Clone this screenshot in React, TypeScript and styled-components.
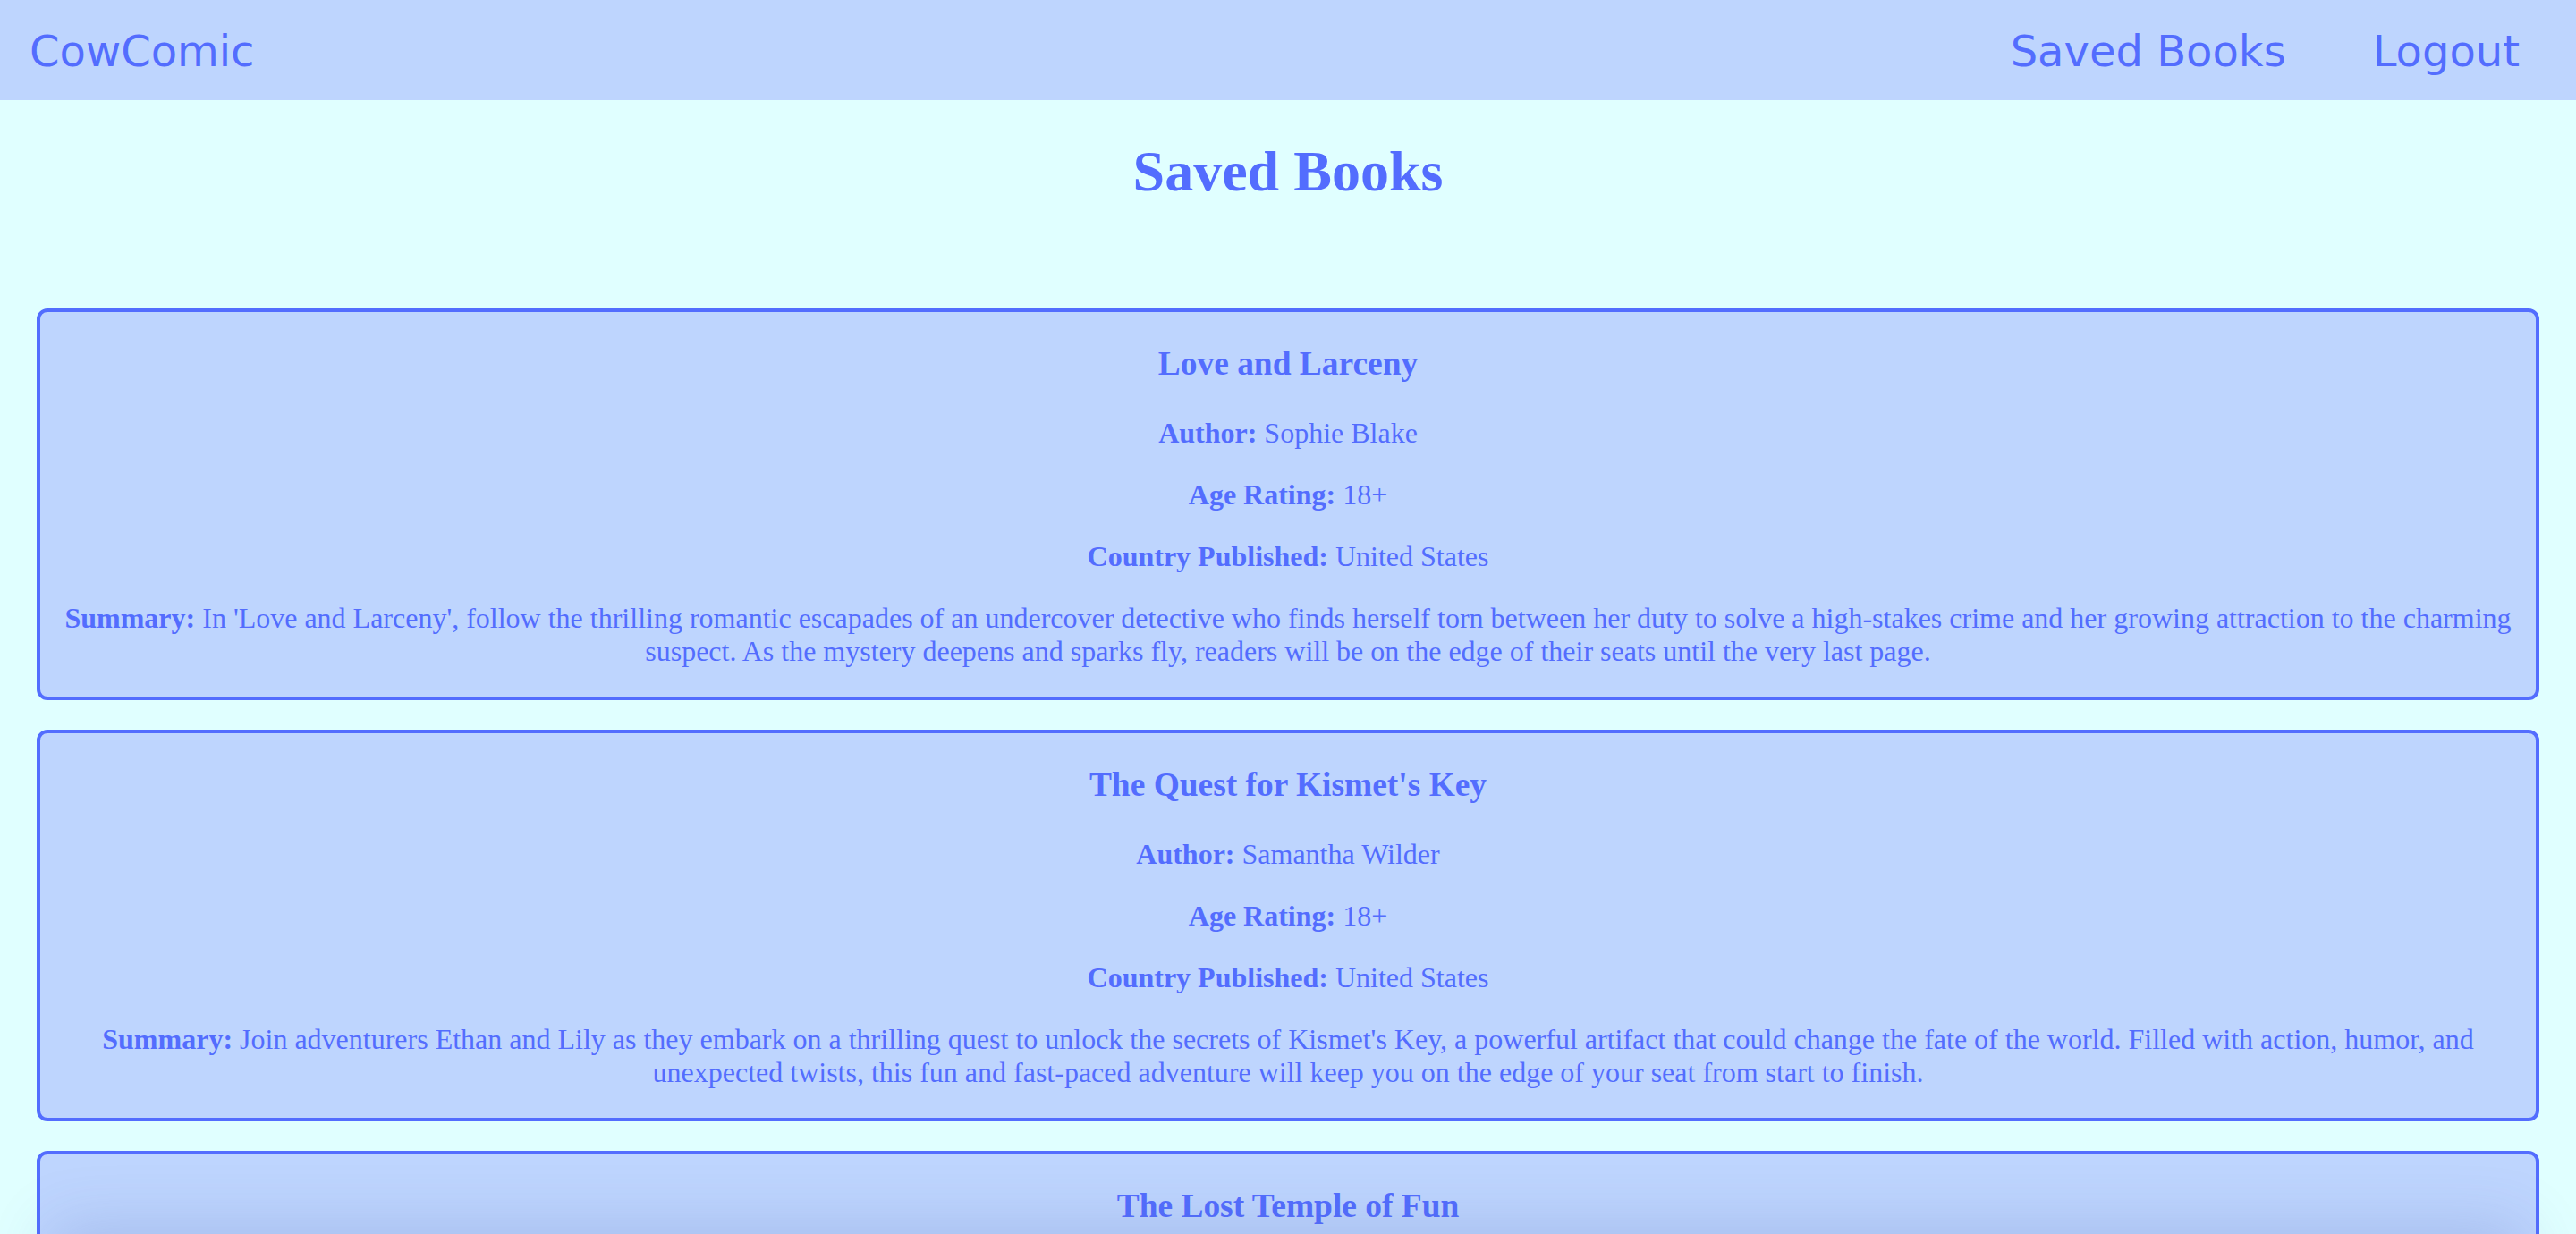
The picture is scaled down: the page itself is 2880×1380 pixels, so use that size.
import React from "react";
import styled, { createGlobalStyle } from "styled-components";

const GlobalStyle = createGlobalStyle`
  html, body {
    margin: 0;
    padding: 0;
    background: #e0ffff;
  }
  body {
    font-family: "Liberation Serif", "Times New Roman", serif;
    font-size: 32px;
    color: #536dfe;
  }
`;

const Header = styled.header`
  height: 112px;
  background: #bed5fe;
  display: flex;
  align-items: center;
  justify-content: space-between;
  padding: 2px 63px 0 33px;
  box-sizing: border-box;
  font-family: "DejaVu Sans", Verdana, sans-serif;
  font-size: 48px;
`;

const Brand = styled.a`
  color: #536dfe;
  text-decoration: none;
`;

const Nav = styled.nav`
  display: flex;
  gap: 97px;
`;

const NavLink = styled.a`
  color: #536dfe;
  text-decoration: none;
`;

const Title = styled.h1`
  font-size: 64px;
  font-weight: bold;
  text-align: center;
  margin: 42.88px 0;
`;

const List = styled.section`
  display: flex;
  flex-direction: column;
  gap: 33px;
  margin: 116px 41px 40px;
`;

const Card = styled.article`
  background: #bed5fe;
  border: 4px solid #536dfe;
  border-radius: 12px;
  padding: 0 20px;
  text-align: center;
`;

const BookTitle = styled.h3`
  font-size: 37.44px;
  font-weight: bold;
  margin: 36.5px 0 37.44px;
`;

const Field = styled.p`
  margin: 32px 0;
`;

const Label = styled.strong`
  font-weight: bold;
`;

const BottomShade = styled.div`
  position: fixed;
  left: 60px;
  right: 60px;
  bottom: -120px;
  height: 120px;
  box-shadow: 0 -6px 70px rgba(70, 90, 170, 0.22);
  pointer-events: none;
`;

type Book = {
  title: string;
  author: string;
  age: string;
  country: string;
  summary: string;
};

const books: Book[] = [
  {
    title: "Love and Larceny",
    author: "Sophie Blake",
    age: "18+",
    country: "United States",
    summary:
      "In 'Love and Larceny', follow the thrilling romantic escapades of an undercover detective who finds herself torn between her duty to solve a high-stakes crime and her growing attraction to the charming suspect. As the mystery deepens and sparks fly, readers will be on the edge of their seats until the very last page.",
  },
  {
    title: "The Quest for Kismet's Key",
    author: "Samantha Wilder",
    age: "18+",
    country: "United States",
    summary:
      "Join adventurers Ethan and Lily as they embark on a thrilling quest to unlock the secrets of Kismet's Key, a powerful artifact that could change the fate of the world. Filled with action, humor, and unexpected twists, this fun and fast-paced adventure will keep you on the edge of your seat from start to finish.",
  },
  {
    title: "The Lost Temple of Fun",
    author: "Oliver Grant",
    age: "13+",
    country: "United States",
    summary:
      "Join a group of daring explorers as they uncover the secrets of an ancient temple filled with puzzles, traps, and laughter. Packed with adventure and humor, this lighthearted tale is perfect for readers who love a good mystery.",
  },
];

const BookCard: React.FC<{ book: Book }> = ({ book }) => (
  <Card>
    <BookTitle>{book.title}</BookTitle>
    <Field>
      <Label>Author:</Label> {book.author}
    </Field>
    <Field>
      <Label>Age Rating:</Label> {book.age}
    </Field>
    <Field>
      <Label>Country Published:</Label> {book.country}
    </Field>
    <Field>
      <Label>Summary:</Label> {book.summary}
    </Field>
  </Card>
);

export default function App() {
  return (
    <>
      <GlobalStyle />
      <Header>
        <Brand href="#">CowComic</Brand>
        <Nav>
          <NavLink href="#">Saved Books</NavLink>
          <NavLink href="#">Logout</NavLink>
        </Nav>
      </Header>
      <main>
        <Title>Saved Books</Title>
        <List>
          {books.map((b) => (
            <BookCard key={b.title} book={b} />
          ))}
        </List>
      </main>
      <BottomShade />
    </>
  );
}
